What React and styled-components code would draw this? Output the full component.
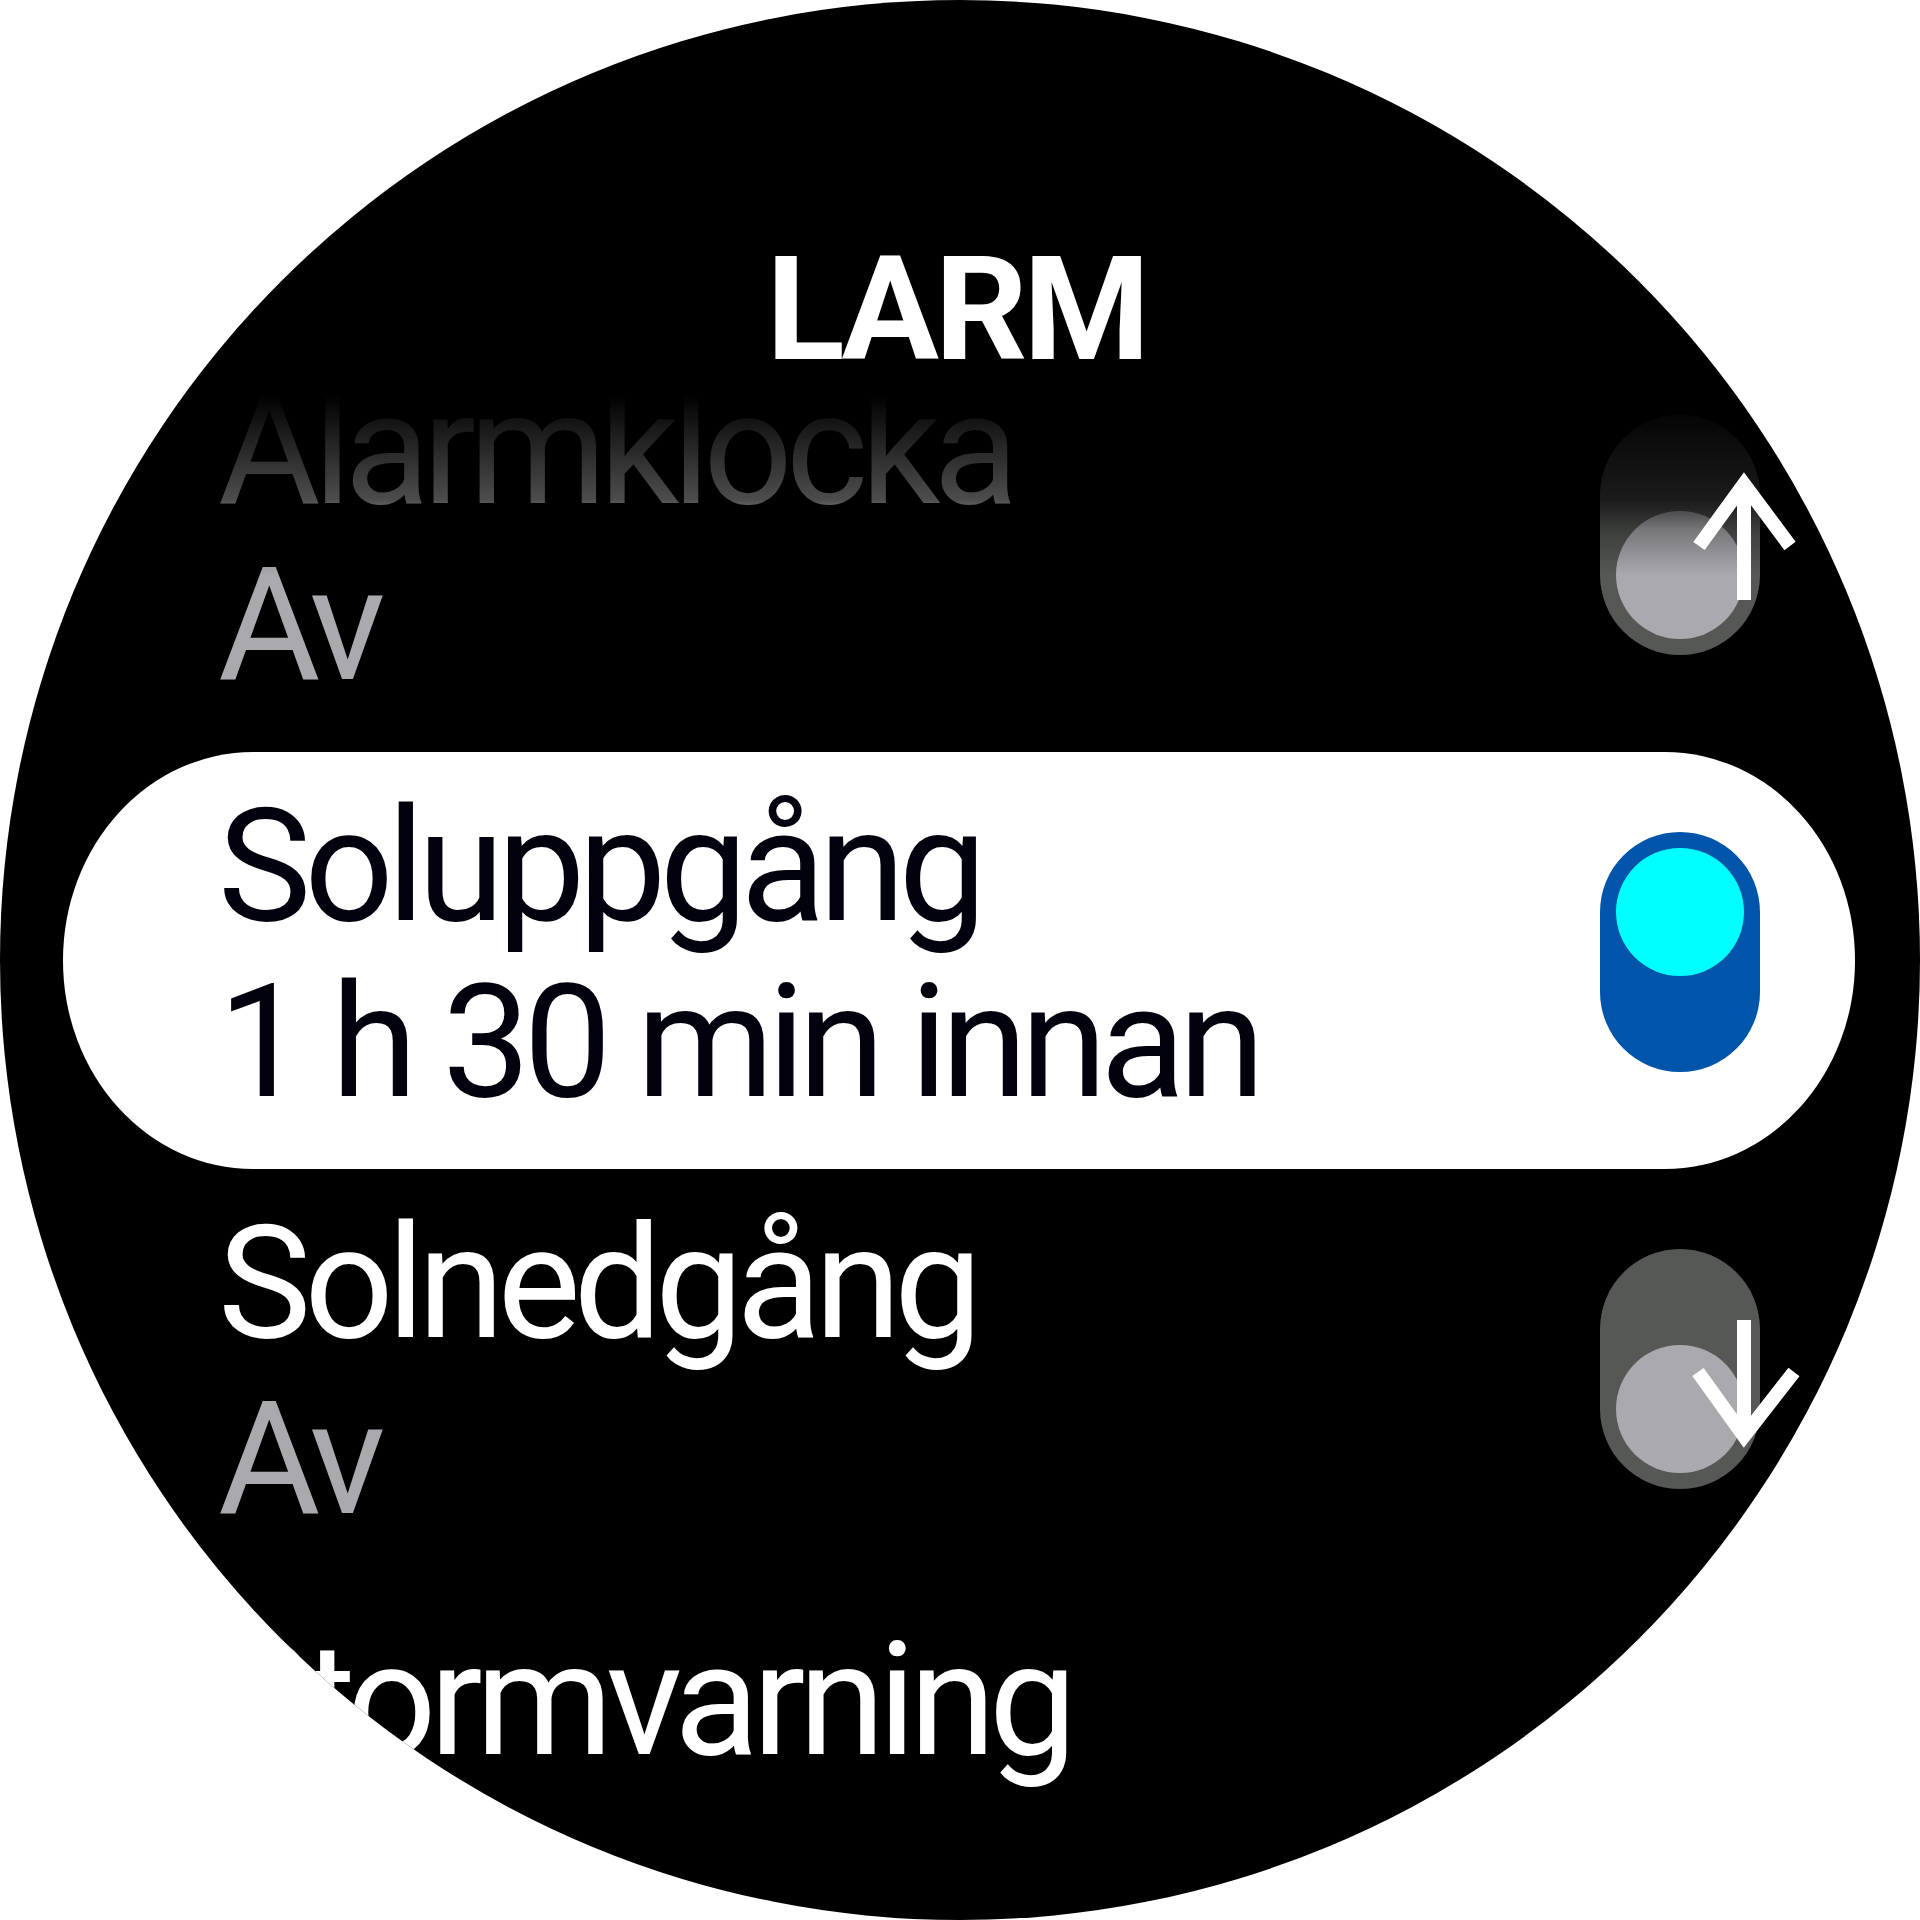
import React from "react";
import styled, { createGlobalStyle } from "styled-components";

const Global = createGlobalStyle`
  html, body { margin: 0; padding: 0; background: #ffffff; }
  #root { width: 1920px; height: 1920px; }
`;

const Face = styled.div`
  position: relative;
  width: 1920px;
  height: 1920px;
  border-radius: 50%;
  background: #000000;
  overflow: hidden;
  display: flex;
  flex-direction: column;
  font-family: Roboto, "Liberation Sans", sans-serif;
`;

const Title = styled.h1`
  margin: 259px 0 0;
  padding-right: 8px;
  height: 100px;
  line-height: 100px;
  font-size: 145px;
  font-weight: 700;
  letter-spacing: -0.03em;
  color: #ffffff;
  text-align: center;
`;

const Viewport = styled.div`
  flex: 1;
  padding: 0 65px 0 63px;
  -webkit-mask-image: linear-gradient(
    to bottom,
    rgba(0, 0, 0, 0) 0px,
    rgba(0, 0, 0, 0) 36px,
    rgba(0, 0, 0, 0.1) 71px,
    rgba(0, 0, 0, 0.3) 141px,
    rgba(0, 0, 0, 0.7) 171px,
    #000 216px
  );
  mask-image: linear-gradient(
    to bottom,
    rgba(0, 0, 0, 0) 0px,
    rgba(0, 0, 0, 0) 36px,
    rgba(0, 0, 0, 0.1) 71px,
    rgba(0, 0, 0, 0.3) 141px,
    rgba(0, 0, 0, 0.7) 171px,
    #000 216px
  );
`;

const Track = styled.div`
  margin-top: -24px;
  display: flex;
  flex-direction: column;
`;

const Row = styled.div`
  height: 417px;
  flex-shrink: 0;
  box-sizing: border-box;
  padding: 26px 95px 39px 155px;
  display: flex;
  align-items: center;
  justify-content: space-between;
  background: ${(p) => (p.$selected ? "#ffffff" : "transparent")};
  border-radius: 190px / 208px;
`;

const Texts = styled.div`
  align-self: flex-start;
  display: flex;
  flex-direction: column;
`;

const Label = styled.div`
  font-size: 157px;
  line-height: 176px;
  height: 176px;
  letter-spacing: -0.045em;
  white-space: nowrap;
  color: ${(p) => (p.$selected ? "#02020f" : "#ffffff")};
`;

const Value = styled(Label)`
  color: ${(p) => (p.$selected ? "#02020f" : "#aaa9ae")};
`;

const Switch = styled.div`
  width: 160px;
  height: 240px;
  box-sizing: border-box;
  padding: 16px;
  border-radius: 80px;
  margin-top: -4px;
  flex-shrink: 0;
  display: flex;
  flex-direction: column;
  justify-content: ${(p) => (p.$on ? "flex-start" : "flex-end")};
  background: ${(p) => (p.$on ? "#0055aa" : "#555855")};
`;

const Knob = styled.div`
  width: 128px;
  height: 128px;
  border-radius: 50%;
  background: ${(p) => (p.$on ? "#00ffff" : "#aaa9ae")};
`;

const Arrow = styled.svg`
  position: absolute;
  left: 1690px;
  top: ${(p) => p.$top}px;
  width: 110px;
  height: 130px;
  overflow: visible;
`;

const items = [
  { label: "Ålarmklocka", value: "Av", on: false },
  { label: "Soluppgång", value: "1 h 30 min innan", on: true, selected: true },
  { label: "Solnedgång", value: "Av", on: false },
  { label: "Stormvarning", value: "", on: false, noSwitch: true },
];

export default function App() {
  return (
    <>
      <Global />
      <Face>
        <Title>LARM</Title>
        <Viewport>
          <Track>
            {items.map((it) => (
              <Row key={it.label} $selected={it.selected}>
                <Texts>
                  <Label $selected={it.selected}>{it.label}</Label>
                  {it.value && <Value $selected={it.selected}>{it.value}</Value>}
                </Texts>
                {!it.noSwitch && (
                  <Switch $on={it.on}>
                    <Knob $on={it.on} />
                  </Switch>
                )}
              </Row>
            ))}
          </Track>
        </Viewport>
        <Arrow $top={474} viewBox="0 0 110 130">
          <g stroke="#ffffff" strokeWidth="14" fill="none" strokeLinejoin="miter">
            <path d="M54 12 V126" />
            <path d="M9 72 L54 10 L100 72" />
          </g>
        </Arrow>
        <Arrow $top={1316} viewBox="0 0 110 130">
          <g stroke="#ffffff" strokeWidth="14" fill="none" strokeLinejoin="miter">
            <path d="M54 4 V118" />
            <path d="M8 56 L54 120 L104 56" />
          </g>
        </Arrow>
      </Face>
    </>
  );
}
